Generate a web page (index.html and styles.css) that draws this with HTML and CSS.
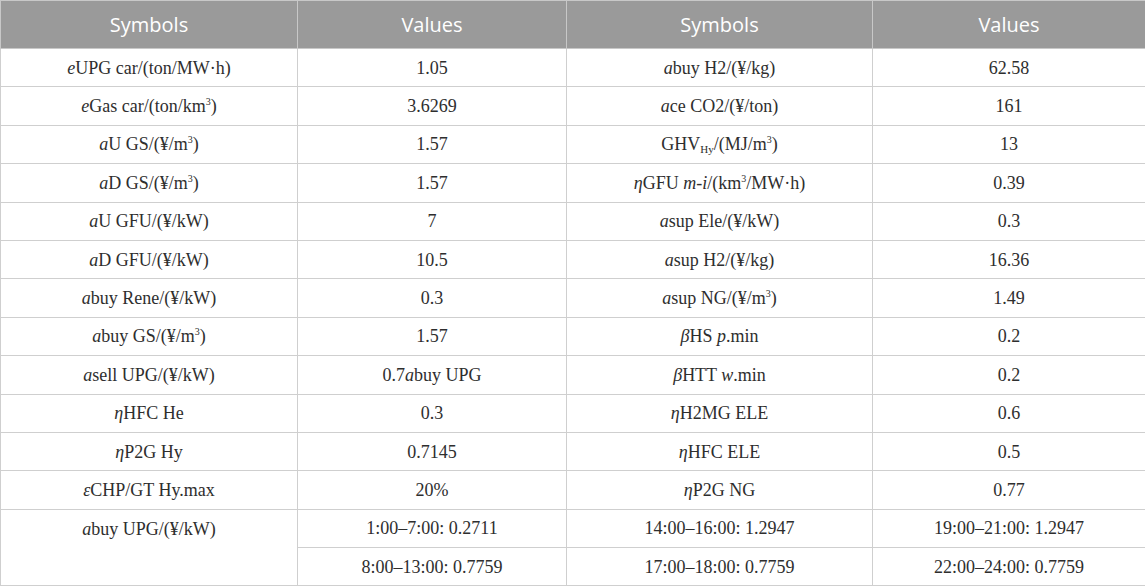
FILE: index.html
```html
<!DOCTYPE html>
<html>
<head>
<meta charset="utf-8">
<link rel="stylesheet" href="styles.css">
</head>
<body>
<table class="params">
  <colgroup>
    <col class="c1"><col class="c2"><col class="c3"><col class="c4">
  </colgroup>
  <thead>
    <tr><th>Symbols</th><th>Values</th><th>Symbols</th><th>Values</th></tr>
  </thead>
  <tbody>
    <tr><td><i>e</i>UPG car/(ton/MW·h)</td><td>1.05</td><td><i>a</i>buy H2/(¥/kg)</td><td>62.58</td></tr>
    <tr><td><i>e</i>Gas car/(ton/km<sup>3</sup>)</td><td>3.6269</td><td><i>a</i>ce CO2/(¥/ton)</td><td>161</td></tr>
    <tr><td><i>a</i>U GS/(¥/m<sup>3</sup>)</td><td>1.57</td><td>GHV<sub>Hy</sub>/(MJ/m<sup>3</sup>)</td><td>13</td></tr>
    <tr><td><i>a</i>D GS/(¥/m<sup>3</sup>)</td><td>1.57</td><td><i>η</i>GFU <i>m-i</i>/(km<sup>3</sup>/MW·h)</td><td>0.39</td></tr>
    <tr><td><i>a</i>U GFU/(¥/kW)</td><td>7</td><td><i>a</i>sup Ele/(¥/kW)</td><td>0.3</td></tr>
    <tr><td><i>a</i>D GFU/(¥/kW)</td><td>10.5</td><td><i>a</i>sup H2/(¥/kg)</td><td>16.36</td></tr>
    <tr><td><i>a</i>buy Rene/(¥/kW)</td><td>0.3</td><td><i>a</i>sup NG/(¥/m<sup>3</sup>)</td><td>1.49</td></tr>
    <tr><td><i>a</i>buy GS/(¥/m<sup>3</sup>)</td><td>1.57</td><td><i>β</i>HS <i>p</i>.min</td><td>0.2</td></tr>
    <tr><td><i>a</i>sell UPG/(¥/kW)</td><td>0.7<i>a</i>buy UPG</td><td><i>β</i>HTT <i>w</i>.min</td><td>0.2</td></tr>
    <tr><td><i>η</i>HFC He</td><td>0.3</td><td><i>η</i>H2MG ELE</td><td>0.6</td></tr>
    <tr><td><i>η</i>P2G Hy</td><td>0.7145</td><td><i>η</i>HFC ELE</td><td>0.5</td></tr>
    <tr><td><i>ε</i>CHP/GT Hy.max</td><td>20%</td><td><i>η</i>P2G NG</td><td>0.77</td></tr>
    <tr><td rowspan="2" class="top"><i>a</i>buy UPG/(¥/kW)</td><td>1:00–7:00: 0.2711</td><td>14:00–16:00: 1.2947</td><td>19:00–21:00: 1.2947</td></tr>
    <tr><td>8:00–13:00: 0.7759</td><td>17:00–18:00: 0.7759</td><td>22:00–24:00: 0.7759</td></tr>
  </tbody>
</table>
</body>
</html>
```

FILE: styles.css
```css
html, body {
  margin: 0;
  padding: 0;
  background: #ffffff;
}

.params {
  width: 1145px;
  border-collapse: collapse;
  table-layout: fixed;
  font-family: "Liberation Serif", "Tinos", "DejaVu Serif", serif;
  font-size: 18px;
  color: #2e2e2e;
}

.c1 { width: 297px; }
.c2 { width: 269px; }
.c3 { width: 306px; }
.c4 { width: 273px; }

.params th {
  background: #9a9a9a;
  color: #ffffff;
  font-family: "Open Sans", "Noto Sans", sans-serif;
  font-weight: 400;
  font-size: 20px;
  height: 47px;
  padding: 0 8px;
  border: 1px solid #c8c8c8;
  text-align: center;
  vertical-align: middle;
}

.params td {
  font-family: "Liberation Serif", "Tinos", "DejaVu Serif", serif;
  height: 37.4px;
  padding: 0 8px;
  border: 1px solid #cfcfcf;
  text-align: center;
  vertical-align: middle;
  line-height: 20px;
}

.params td.top {
  vertical-align: top;
  padding-top: 9px;
}

.params sup {
  font-size: 10px;
  vertical-align: 7px;
  line-height: 0;
}

.params sub {
  font-size: 11px;
  vertical-align: -3px;
  line-height: 0;
}
```
